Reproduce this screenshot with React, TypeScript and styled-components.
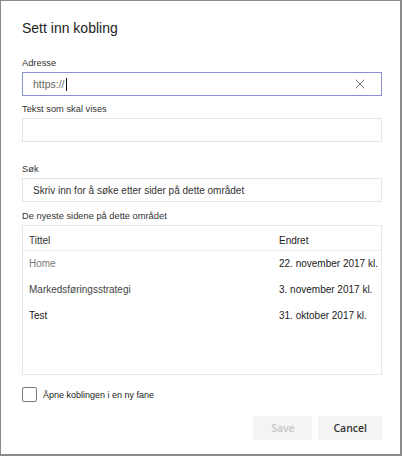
import React from "react";
import styled, { createGlobalStyle } from "styled-components";
import { X } from "lucide-react";

const pages = [
  { title: "Home", date: "22. november 2017 kl.", tone: "#777" },
  { title: "Markedsføringsstrategi", date: "3. november 2017 kl.", tone: "#444" },
  { title: "Test", date: "31. oktober 2017 kl.", tone: "#1a1a1a" },
];

const InsertLinkDialog: React.FC = () => {
  return (
    <>
      <GlobalStyle />
      <Dialog>
        <Title>Sett inn kobling</Title>

        <Field $gap={18}>
          <Label>Adresse</Label>
          <InputBox $focused>
            <InputText>
              https://
              <Caret />
            </InputText>
            <ClearButton aria-label="Tøm">
              <X size={16} strokeWidth={1.4} />
            </ClearButton>
          </InputBox>
        </Field>

        <Field $gap={6}>
          <Label>Tekst som skal vises</Label>
          <InputBox />
        </Field>

        <Field $gap={20}>
          <Label>Søk</Label>
          <InputBox>
            <Placeholder>Skriv inn for å søke etter sider på dette området</Placeholder>
          </InputBox>
        </Field>

        <Field $gap={7}>
          <Label>De nyeste sidene på dette området</Label>
          <PageTable>
            <HeaderRow>
              <TitleCell>Tittel</TitleCell>
              <DateCell>Endret</DateCell>
            </HeaderRow>
            {pages.map((page) => (
              <PageRow key={page.title}>
                <TitleCell $tone={page.tone}>{page.title}</TitleCell>
                <DateCell>{page.date}</DateCell>
              </PageRow>
            ))}
          </PageTable>
        </Field>

        <CheckRow>
          <CheckBox />
          <CheckLabel>Åpne koblingen i en ny fane</CheckLabel>
        </CheckRow>

        <Actions>
          <ActionButton disabled>Save</ActionButton>
          <ActionButton>Cancel</ActionButton>
        </Actions>
      </Dialog>
    </>
  );
};

const GlobalStyle = createGlobalStyle`
  html, body {
    margin: 0;
    padding: 0;
    background: #fff;
  }

  body {
    font-family: "Liberation Sans", Arial, sans-serif;
  }
`;

const Dialog = styled.div`
  background: #fff;
  border: 1px solid #8a8a8a;
  border-bottom-width: 2px;
  border-right-width: 2px;
  box-sizing: border-box;
  display: flex;
  flex-direction: column;
  height: 456px;
  padding: 17px 18px 0 21px;
  width: 402px;
`;

const Title = styled.h1`
  color: #222;
  font-size: 14px;
  font-weight: 400;
  line-height: 20px;
  margin: 0;
`;

const Field = styled.div<{ $gap: number }>`
  display: flex;
  flex-direction: column;
  margin-top: ${(p) => p.$gap}px;
`;

const Label = styled.label`
  color: #333;
  font-size: 9.3px;
  line-height: 15px;
  margin-bottom: 1px;
`;

const InputBox = styled.div<{ $focused?: boolean }>`
  align-items: center;
  background: #fff;
  border: 1px solid ${(p) => (p.$focused ? "#8b8fd4" : "#e4e4e4")};
  box-sizing: border-box;
  display: flex;
  height: 24px;
  padding: 0 13px 0 10px;
`;

const InputText = styled.span`
  align-items: center;
  color: #666;
  display: flex;
  flex: 1;
  font-size: 10.5px;
`;

const Caret = styled.span`
  background: #111;
  display: inline-block;
  height: 13px;
  margin-left: 1px;
  width: 1px;
`;

const Placeholder = styled.span`
  color: #333;
  font-size: 10px;
`;

const ClearButton = styled.span`
  color: #666;
  display: flex;
`;

const PageTable = styled.div`
  border: 1px solid #e6e6e6;
  box-sizing: border-box;
  height: 150px;
  overflow: hidden;
`;

const HeaderRow = styled.div`
  border-bottom: 1px solid #ececec;
  color: #333;
  display: grid;
  font-size: 10px;
  grid-template-columns: 256px 1fr;
  line-height: 14px;
  padding: 8px 0 2px;
`;

const PageRow = styled.div`
  align-items: center;
  display: grid;
  font-size: 10px;
  grid-template-columns: 256px 1fr;
  height: 26px;
  line-height: 14px;
`;

const TitleCell = styled.span<{ $tone?: string }>`
  color: ${(p) => p.$tone || "#333"};
  padding-left: 6px;
`;

const DateCell = styled.span`
  color: #222;
  overflow: hidden;
  white-space: nowrap;
`;

const CheckRow = styled.div`
  align-items: center;
  display: flex;
  gap: 6px;
  margin-top: 12px;
`;

const CheckBox = styled.span`
  border: 1px solid #777;
  border-radius: 2px;
  box-sizing: border-box;
  height: 15px;
  width: 15px;
`;

const CheckLabel = styled.span`
  color: #222;
  font-size: 9px;
  line-height: 14px;
`;

const Actions = styled.div`
  display: flex;
  gap: 6px;
  justify-content: flex-end;
  margin-top: 14px;
`;

const ActionButton = styled.button`
  background: #f4f4f4;
  border: none;
  color: ${(p) => (p.disabled ? "#c6c6c6" : "#333")};
  font-family: "Open Sans", sans-serif;
  font-size: 10.5px;
  font-weight: 600;
  height: 24px;
  min-width: 59px;
  padding: 0 15px;
`;

export default InsertLinkDialog;
